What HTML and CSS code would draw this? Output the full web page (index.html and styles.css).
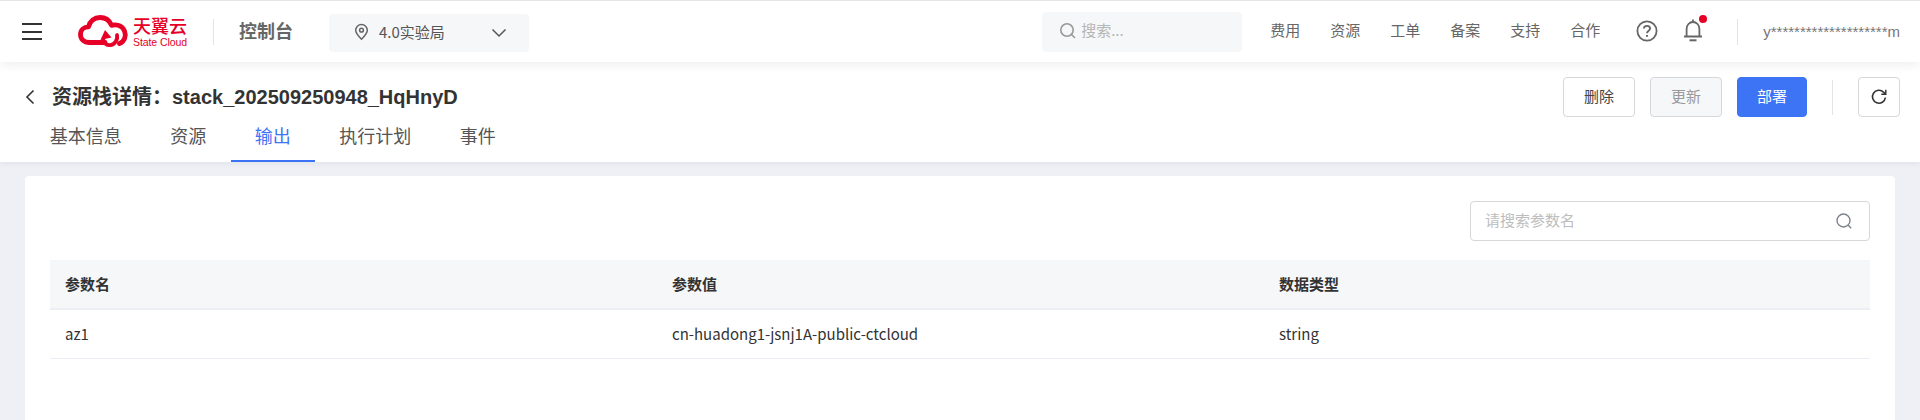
FILE: index.html
```html
<!DOCTYPE html>
<html lang="zh-CN">
<head>
<meta charset="utf-8">
<title>资源栈详情</title>
<link rel="stylesheet" href="styles.css">
</head>
<body>
<header class="topbar">
  <button class="menu" aria-label="菜单"><span></span><span></span><span></span></button>
  <svg class="logo" width="109" height="36" viewBox="0 0 109 36" fill="none" stroke="#e60027" stroke-width="4.8" stroke-linecap="round" stroke-linejoin="round">
    <path d="M27 29.5H11.5C6 29.5 2.5 26 2.5 21.5C2.5 17 6 13.8 10.5 13.8C12 8 16.5 4.5 22 4.5C27.5 4.5 31.5 7.5 33.5 12.3C38 11.4 44 12 46.5 18C48.5 23 46.5 28.5 41.5 30.5"/>
    <path d="M39 22C40 27 36.5 32 32 32.2C28.5 32.4 26 30 25.3 27" stroke-width="3.8"/>
    <path d="M22.5 27L27 17L33.5 24.5Z" fill="#e60027" stroke="none"/>
    <text class="logo-cn" x="55" y="20" textLength="54">天翼云</text>
    <text class="logo-en" x="55" y="33" textLength="54">State Cloud</text>
  </svg>
  <i class="vline logo-line"></i>
  <div class="console">控制台</div>
  <div class="region">
    <svg class="lift" width="15" height="18" viewBox="0 0 16 18" fill="none" stroke="#666" stroke-width="1.6"><path d="M8 16.8C5 13.8 1.8 10.6 1.8 7.2A6.2 6.2 0 0 1 14.2 7.2C14.2 10.6 11 13.8 8 16.8Z"/><circle cx="8" cy="7" r="2"/></svg>
    <span class="region-name">4.0实验局</span>
    <svg class="chev" width="16" height="10" viewBox="0 0 16 10" fill="none" stroke="#555" stroke-width="1.5"><path d="M1.5 1.5L8 8L14.5 1.5"/></svg>
  </div>
  <div class="spacer"></div>
  <div class="search">
    <svg class="lift" width="18" height="18" viewBox="0 0 18 18" fill="none" stroke="#999" stroke-width="1.6"><circle cx="8" cy="8" r="6.2"/><path d="M12.5 12.5L16 16"/></svg>
    <span>搜索...</span>
  </div>
  <nav class="nav"><a>费用</a><a>资源</a><a>工单</a><a>备案</a><a>支持</a><a>合作</a></nav>
  <svg class="help lift" width="22" height="22" viewBox="0 0 22 22" fill="none" stroke="#666" stroke-width="1.8"><circle cx="11" cy="11" r="9.6"/><path d="M7.9 8.6C7.9 6.8 9.3 5.8 11 5.8C12.8 5.8 14.1 6.9 14.1 8.5C14.1 10.6 11 10.8 11 13.2"/><path d="M11 15V16.8" stroke-width="2"/></svg>
  <div class="bell">
    <svg width="20" height="24" viewBox="0 0 20 24" fill="none" stroke="#666" stroke-width="1.8"><path d="M1 18.5H19M3.6 18.5V11C3.6 7 6.4 4 10 4C13.6 4 16.4 7 16.4 11V18.5"/><path d="M10 1.5V4"/><path d="M6.5 22.3H13.5" stroke-width="2"/></svg>
    <b class="dot"></b>
  </div>
  <i class="vline user-line"></i>
  <div class="user">y********************m</div>
</header>

<section class="subhead">
  <div class="title-row">
    <svg class="back" width="10" height="16" viewBox="0 0 10 16" fill="none" stroke="#333" stroke-width="1.6"><path d="M8.5 1.5L2 8L8.5 14.5"/></svg>
    <h1>资源栈详情：stack_202509250948_HqHnyD</h1>
    <div class="actions">
      <button class="btn">删除</button>
      <button class="btn disabled">更新</button>
      <button class="btn primary">部署</button>
      <i class="vline act-line"></i>
      <button class="btn icon" aria-label="刷新">
        <svg width="18" height="18" viewBox="0 0 18 18" fill="none" stroke="#333" stroke-width="1.6"><path d="M15.4 9.5A6.5 6.5 0 1 1 13.6 4.2L15.5 6"/><path d="M15.8 1.8V6.3H11.3" stroke-width="1.4"/></svg>
      </button>
    </div>
  </div>
  <div class="tabs"><a>基本信息</a><a>资源</a><a class="active">输出</a><a>执行计划</a><a>事件</a></div>
</section>

<main class="content">
  <div class="card">
    <div class="toolbar">
      <div class="filter">
        <span>请搜索参数名</span>
        <svg width="18" height="18" viewBox="0 0 18 18" fill="none" stroke="#7d828c" stroke-width="1.4"><circle cx="8.5" cy="8.5" r="6.5"/><path d="M13.2 13.2L16.2 16.2"/></svg>
      </div>
    </div>
    <div class="table">
      <div class="row head"><div>参数名</div><div>参数值</div><div>数据类型</div></div>
      <div class="row"><div>az1</div><div>cn-huadong1-jsnj1A-public-ctcloud</div><div>string</div></div>
    </div>
  </div>
</main>
</body>
</html>
```

FILE: styles.css
```css
* { box-sizing: border-box; }
html, body { margin: 0; height: 100%; overflow: hidden; }
body {
  background: #eef0f5;
  font-family: "Noto Sans CJK SC", "Noto Sans", sans-serif;
  color: #333;
}
.vline { display: block; width: 1px; flex: none; background: #e3e4e7; }
.lift { margin-bottom: 2px; }

.topbar {
  position: relative;
  z-index: 2;
  height: 62px;
  display: flex;
  align-items: center;
  background: #fff;
  border-top: 1px solid #e4e4e4;
  box-shadow: 0 2px 10px rgba(40, 50, 80, .09);
}
.menu {
  flex: none;
  width: 20px; height: 17px; margin-left: 22px; padding: 0;
  border: 0; background: none;
  display: flex; flex-direction: column; justify-content: space-between;
}
.menu span { display: block; height: 2px; background: #333; }
.logo { flex: none; margin-left: 36px; margin-bottom: 1px; }
.logo-cn { fill: #e60027; stroke: none; font-size: 18px; font-weight: 500; }
.logo-en { fill: #e60027; stroke: none; font-family: "Liberation Sans", sans-serif; font-size: 10.5px; }
.logo-line { height: 26px; margin-left: 26px; }
.console { margin-left: 25px; margin-bottom: 4px; font-size: 18px; font-weight: 700; color: #666; white-space: nowrap; }
.region {
  display: flex; align-items: center;
  width: 200px; height: 38px; margin: 2px 0 0 36px; padding: 0 22px 0 25px;
  background: #f6f7f9; border-radius: 4px;
}
.region-name { margin-left: 10px; margin-bottom: 3px; font-size: 15px; color: #555; white-space: nowrap; }
.chev { margin-left: auto; }
.spacer { flex: 1; }
.search {
  display: flex; align-items: center;
  width: 200px; height: 40px; padding-left: 17px;
  background: #f6f7f9; border-radius: 4px;
  font-size: 15px; color: #b5b5b5;
}
.search span { margin-left: 4px; margin-bottom: 4px; }
.nav { display: flex; gap: 30px; margin-left: 28px; margin-bottom: 4px; font-size: 15px; color: #666; white-space: nowrap; }
.help { margin-left: 36px; flex: none; }
.bell { position: relative; margin-left: 25px; height: 24px; margin-bottom: 4px; }
.bell svg { display: block; }
.dot { position: absolute; left: 16px; top: -3px; width: 8px; height: 8px; border-radius: 50%; background: #e60027; }
.user-line { height: 26px; margin-left: 34px; }
.user { margin-left: 25px; margin-right: 20px; font-family: "Liberation Sans", sans-serif; font-size: 15px; color: #777; white-space: nowrap; }

.subhead {
  position: relative;
  z-index: 1;
  height: 100px;
  background: #fff;
  box-shadow: 0 1px 6px rgba(40, 50, 80, .08);
  display: flex; flex-direction: column;
}
.title-row { display: flex; align-items: center; height: 40px; margin-top: 15px; padding: 0 20px 0 25px; flex: none; }
.back { flex: none; }
h1 {
  margin: 0 0 4px 17px;
  font-family: "Liberation Sans", "Noto Sans CJK SC", sans-serif;
  font-size: 20px; font-weight: 700; color: #333; white-space: nowrap;
}
.actions { margin-left: auto; display: flex; align-items: center; }
.btn {
  width: 72px; height: 40px; padding: 0 0 3px;
  border: 1px solid #d6d7da; border-radius: 4px; background: #fff;
  font-family: inherit; font-size: 15px; color: #444;
  margin-right: 15px;
}
.btn.disabled { background: #f6f7f9; color: #9a9a9a; }
.btn.primary { width: 70px; margin-right: 0; background: #3d73f5; border-color: #3d73f5; color: #fff; }
.btn.icon { width: 42px; margin-right: 0; padding: 0; display: flex; align-items: center; justify-content: center; }
.act-line { height: 35px; margin: 0 25px; }
.tabs { display: flex; height: 45px; padding-left: 25.5px; font-size: 18px; color: #555; white-space: nowrap; }
.tabs a { padding: 0 24.25px; height: 45px; line-height: 36px; border-bottom: 2px solid transparent; }
.tabs a.active { color: #3d73f5; border-bottom-color: #3d73f5; }

.content { padding: 14px 25px 0; }
.card { background: #fff; border-radius: 4px 4px 0 0; height: 244px; padding: 25px 25px 0; }
.toolbar { display: flex; justify-content: flex-end; }
.filter {
  display: flex; align-items: center; justify-content: space-between;
  width: 400px; height: 40px; padding: 0 16px 0 14px;
  border: 1px solid #d6d7da; border-radius: 4px;
  font-size: 15px; color: #bdbdbd;
}
.filter span { margin-bottom: 3px; }
.table { margin-top: 19px; font-size: 15px; color: #333; }
.row { display: grid; grid-template-columns: 607px 607px 1fr; height: 49px; align-items: center; padding: 0 0 2px 15px; border-bottom: 1px solid #edeef3; }
.row.head { height: 50px; background: #f6f7f9; font-weight: 700; border-bottom-width: 2px; }
```
